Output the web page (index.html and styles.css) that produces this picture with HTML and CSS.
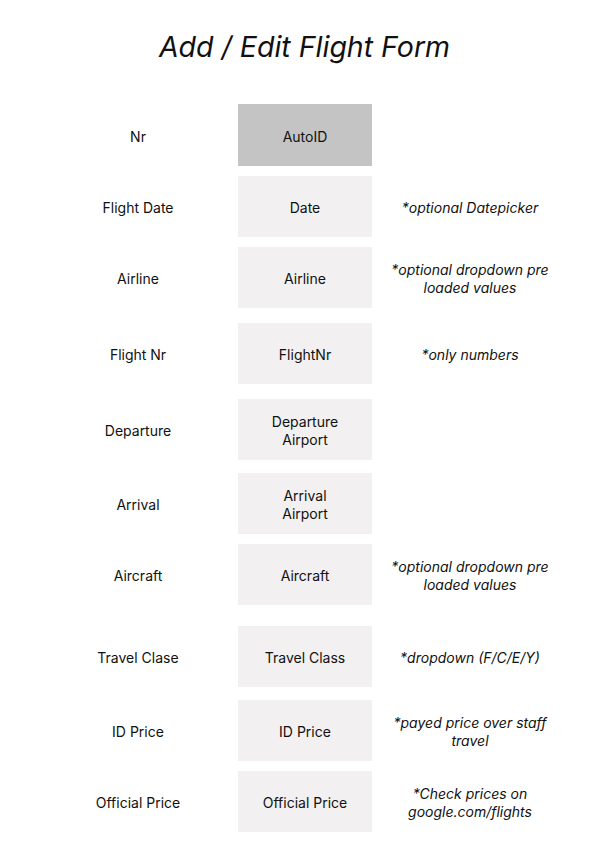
FILE: index.html
```html
<!DOCTYPE html>
<html lang="en">
  <head>
    <meta charset="UTF-8" />
    <meta name="viewport" content="width=device-width, initial-scale=1.0" />
    <title>Add / Edit Flight Form</title>
    <link rel="stylesheet" href="styles.css">
  </head>
  <body>
    <div class="page">
      <h1 class="title">Add / Edit Flight Form</h1>

      <div class="form-grid">
        <div class="row">
          <div class="label">Nr</div>
          <div class="field field--locked">AutoID</div>
          <div class="note"></div>
        </div>

        <div class="row">
          <div class="label">Flight Date</div>
          <div class="field">Date</div>
          <div class="note">*optional Datepicker</div>
        </div>

        <div class="row">
          <div class="label">Airline</div>
          <div class="field">Airline</div>
          <div class="note">*optional dropdown pre loaded values</div>
        </div>

        <div class="row spaced-md">
          <div class="label">Flight Nr</div>
          <div class="field">FlightNr</div>
          <div class="note">*only numbers</div>
        </div>

        <div class="row spaced-md">
          <div class="label">Departure</div>
          <div class="field">Departure<br />Airport</div>
          <div class="note"></div>
        </div>

        <div class="row spaced-sm">
          <div class="label">Arrival</div>
          <div class="field">Arrival<br />Airport</div>
          <div class="note"></div>
        </div>

        <div class="row">
          <div class="label">Aircraft</div>
          <div class="field">Aircraft</div>
          <div class="note">*optional dropdown pre loaded values</div>
        </div>

        <div class="row spaced-lg">
          <div class="label">Travel Clase</div>
          <div class="field">Travel Class</div>
          <div class="note">*dropdown (F/C/E/Y)</div>
        </div>

        <div class="row spaced-sm">
          <div class="label">ID Price</div>
          <div class="field">ID Price</div>
          <div class="note">*payed price over staff travel</div>
        </div>

        <div class="row">
          <div class="label">Official Price</div>
          <div class="field">Official Price</div>
          <div class="note">*Check prices on google.com/flights</div>
        </div>
      </div>
    </div>
  </body>
</html>
```

FILE: styles.css
```css
:root {
  --text: #111111;
  --field-bg: #f2f0f0;
  --field-locked: #c4c4c4;
  --white: #ffffff;
}

* {
  margin: 0;
  padding: 0;
  box-sizing: border-box;
  font-family: "Inter", "Liberation Sans", sans-serif;
}

body {
  background-color: var(--white);
  color: var(--text);
}

.page {
  width: 605px;
  padding-top: 30px;
}

.title {
  font-size: 28.5px;
  font-weight: 400;
  font-style: italic;
  line-height: 34px;
  text-align: center;
  padding-left: 4px;
  margin-bottom: 40px;
}

/* Form rows */
.form-grid {
  display: flex;
  flex-direction: column;
  gap: 10px;
  padding-left: 38px;
}

.row {
  display: grid;
  grid-template-columns: 200px 134px 196px;
  height: 61px;
  align-items: center;
  font-size: 14px;
  line-height: 18px;
  text-align: center;
}

.row:first-child {
  height: 62px;
}

.spaced-sm {
  margin-top: 3px;
}

.spaced-md {
  margin-top: 5px;
}

.spaced-lg {
  margin-top: 11px;
}

.label {
  padding-top: 3px;
}

.field {
  height: 100%;
  display: flex;
  align-items: center;
  justify-content: center;
  padding-top: 3px;
  background-color: var(--field-bg);
}

.field--locked {
  background-color: var(--field-locked);
}

.note {
  font-style: italic;
  padding: 3px 10px 0;
}
```
